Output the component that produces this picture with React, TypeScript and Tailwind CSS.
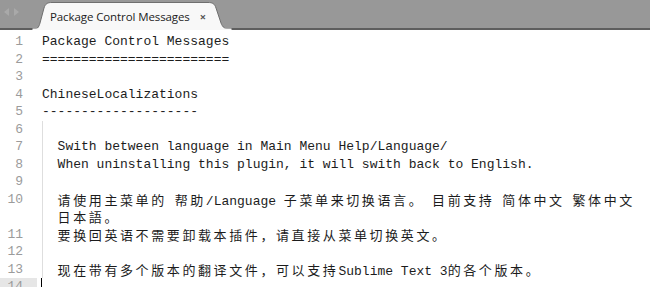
import React from "react";

type Line = { n?: number; text: string; guide?: boolean };

const lines: Line[] = [
  { n: 1, text: "Package Control Messages" },
  { n: 2, text: "========================" },
  { n: 3, text: "" },
  { n: 4, text: "ChineseLocalizations" },
  { n: 5, text: "--------------------" },
  { n: 6, text: "", guide: true },
  { n: 7, text: "  Swith between language in Main Menu Help/Language/", guide: true },
  { n: 8, text: "  When uninstalling this plugin, it will swith back to English.", guide: true },
  { n: 9, text: "", guide: true },
  { n: 10, text: "  请使用主菜单的 帮助/Language 子菜单来切换语言。 目前支持 简体中文 繁体中文", guide: true },
  { text: "  日本語。", guide: true },
  { n: 11, text: "  要换回英语不需要卸载本插件，请直接从菜单切换英文。", guide: true },
  { n: 12, text: "", guide: true },
  { n: 13, text: "  现在带有多个版本的翻译文件，可以支持Sublime Text 3的各个版本。", guide: true },
];

// split text so CJK chars get a double-width cell like the editor draws them
function Code({ text }: { text: string }) {
  const parts = text.split(/([\u3000-\u303f\u4e00-\u9fff\uff00-\uffef]+)/);
  return (
    <>
      {parts.map((p, i) =>
        /[\u3000-\u303f\u4e00-\u9fff\uff00-\uffef]/.test(p) ? (
          <span key={i} className="font-['Noto_Sans_CJK_SC',sans-serif] text-[13px] tracking-[2.6px]">
            {p}
          </span>
        ) : (
          <span key={i}>{p}</span>
        )
      )}
    </>
  );
}

function Row({ line }: { line: Line }) {
  return (
    <div className="flex h-[17.5px] leading-[17.5px]">
      <div className="w-[37px] shrink-0 pr-[14px] text-right text-[#9b9b9b]">{line.n ?? ""}</div>
      <div className="pl-[5px] flex-1">
        <div
          className={
            line.guide
              ? "h-full whitespace-pre shadow-[inset_1px_0_0_#dedede]"
              : "h-full whitespace-pre"
          }
        >
          <Code text={line.text} />
        </div>
      </div>
    </div>
  );
}

function TabBar() {
  return (
    <div className="flex h-[30px] items-end bg-[#989898] border-b-2 border-b-[#5e5e5e]">
      <div className="flex h-[30px] w-[32px] items-center gap-[3px] pl-[4px] pb-[2px]">
        <svg width="6" height="8" viewBox="0 0 6 8">
          <path d="M5 0 L0 4 L5 8 Z" fill="#a9a9a9" />
        </svg>
        <svg width="6" height="8" viewBox="0 0 6 8">
          <path d="M1 0 L6 4 L1 8 Z" fill="#a9a9a9" />
        </svg>
      </div>
      <div className="relative -mb-[2px] h-[30px] w-[200px]">
        <svg className="absolute inset-0" width="200" height="30" viewBox="0 0 200 30">
          <path
            d="M0 30 C5 30 7 27 8 23 L12 8 C13.5 3.5 15.5 2.5 20 2.5 L176 2.5 C180.5 2.5 182.5 3.5 184 8 L189 23 C190.5 27 193 30 200 30 Z"
            fill="#f8f8f8"
            stroke="#6f6f6f"
            strokeWidth="1"
          />
          <path d="M0.5 29.5 L199.5 29.5" stroke="#f8f8f8" strokeWidth="2" />
        </svg>
        <div className="relative flex h-full items-center pl-[18px] pt-[4px] font-['Open_Sans',sans-serif] text-[11.5px] text-[#222]">
          <span className="tracking-[-0.1px]">Package Control Messages</span>
          <span className="ml-[10px] text-[11px] font-bold text-[#555]">×</span>
        </div>
      </div>
    </div>
  );
}

export default function App() {
  return (
    <div className="h-[287px] w-[650px] overflow-hidden bg-white">
      <TabBar />
      <div className="pt-[3px] font-['Liberation_Mono',monospace] text-[13px] text-[#1c1c1c]">
        {lines.map((l, i) => (
          <Row key={i} line={l} />
        ))}
        <div className="flex h-[17.5px] leading-[17.5px]">
          <div className="w-[37px] shrink-0 bg-[#e6e6e6] pr-[14px] text-right text-[#9b9b9b]">14</div>
          <div className="pl-[4px]">
            <div className="h-[17.5px] w-px bg-black" />
          </div>
        </div>
      </div>
    </div>
  );
}
